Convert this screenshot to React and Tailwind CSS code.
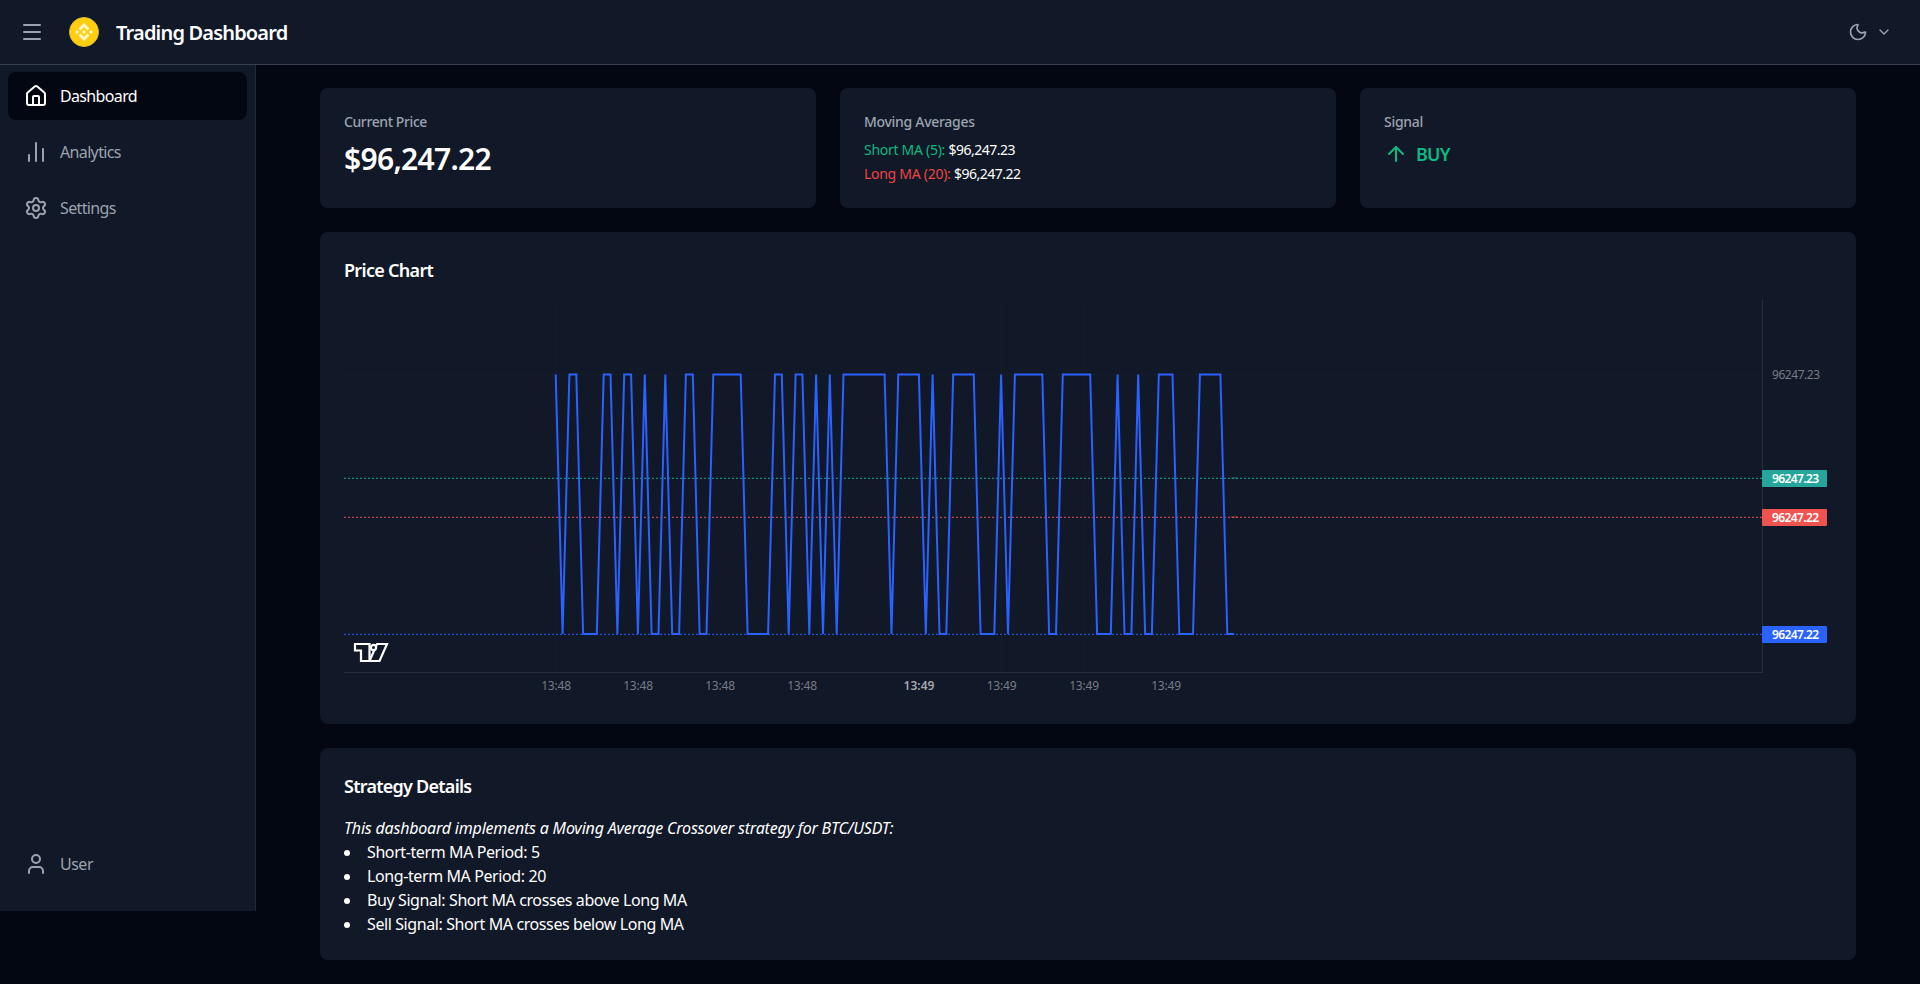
import { ArrowUp, ChartNoAxesColumn, ChevronDown, House, Menu, Moon, Settings, User } from "lucide-react";

const FONT = "font-['Noto_Sans',sans-serif]";

// H = top of the range, L = bottom, one letter per tick
const TICKS = "HLHHLLLHHLHHLHLLHLLHHLLHHHHHLLLLHHLHHLHLHLHHHHHHHLHHHHLHLLHHHHLLLHLHHHHHLLHHHHHLLLHLLHLLHHHLLLHHHHLL";
const X0 = 211.7;
const STEP = 6.853;
const Y_HIGH = 74.5;
const Y_LOW = 334;

const linePoints = TICKS.split("")
    .map((t, i) => `${(X0 + i * STEP).toFixed(1)},${t === "H" ? Y_HIGH : Y_LOW}`)
    .join(" ");

const TIME_LABELS = [
    { x: 212, text: "13:48" },
    { x: 294, text: "13:48" },
    { x: 376, text: "13:48" },
    { x: 458, text: "13:48" },
    { x: 575, text: "13:49", strong: true },
    { x: 657.5, text: "13:49" },
    { x: 740, text: "13:49" },
    { x: 822, text: "13:49" },
];

const PRICE_LINES = [
    { y: 178.5, color: "#26a69a", label: "96247.23" },
    { y: 217.5, color: "#ef5350", label: "96247.22" },
    { y: 334.5, color: "#2962ff", label: "96247.22" },
];

const NAV = [
    { label: "Dashboard", icon: House, active: true },
    { label: "Analytics", icon: ChartNoAxesColumn },
    { label: "Settings", icon: Settings },
];

const BinanceLogo = () => (
    <span className="flex h-[30px] w-[30px] items-center justify-center rounded-full border border-[#e0b83a] bg-[#ffcf0d]">
        <svg width="18" height="18" viewBox="0 0 24 24" fill="#fff7d6">
            <path d="M16.624 13.9202l2.7175 2.7154-7.353 7.353-7.353-7.352 2.7175-2.7164 4.6355 4.6595 4.6356-4.6595zm4.6366-4.6366L24 12l-2.7154 2.7164L18.5682 12l2.6924-2.7164zm-9.272.001l2.7163 2.6914-2.7164 2.7174v-.001L9.2721 12l2.7164-2.7154zm-9.2722-.001L5.4088 12l-2.6914 2.6924L0 12l2.7164-2.7164zM11.9885.0115l7.353 7.329-2.7174 2.7154-4.6356-4.6356-4.6355 4.6595-2.7174-2.7154 7.353-7.353z" />
        </svg>
    </span>
);

const PriceChart = () => (
    <svg width="1488" height="400" viewBox="0 0 1488 400" className="block">
        {[211.7, 294, 376, 458, 575, 657.5, 740, 822].map((x) => (
            <line key={x} x1={x} x2={x} y1="0" y2="372" stroke="#2a2e39" strokeOpacity="0.2" />
        ))}
        <line x1="0" x2="1418" y1="74.5" y2="74.5" stroke="#2a2e39" strokeOpacity="0.2" />

        <rect x="887" y="177" width="7" height="2" fill="#26a69a" opacity="0.3" />
        <rect x="887" y="216" width="7" height="2" fill="#ef5350" opacity="0.3" />

        {PRICE_LINES.map((l) => (
            <line key={l.y} x1="0" x2="1418" y1={l.y - 0.2} y2={l.y - 0.2} stroke={l.color} strokeWidth="1" strokeDasharray="2 2" />
        ))}

        <polyline points={linePoints} fill="none" stroke="#2962ff" strokeWidth="2" strokeLinejoin="miter" />

        <line x1="1418.5" x2="1418.5" y1="0" y2="372" stroke="#2a2e39" />
        <line x1="0" x2="1419" y1="372.5" y2="372.5" stroke="#2a2e39" />

        <text x="1428" y="79" fontSize="12" fill="#787b86" fontFamily="Noto Sans" letterSpacing="-0.45">96247.23</text>

        {PRICE_LINES.map((l) => (
            <g key={l.label + l.y}>
                <rect x="1418" y={l.y - 8.5} width="65" height="17" rx="1" fill={l.color} />
                <text x="1428" y={l.y + 4} fontSize="12" fontWeight="600" fill="#fff" fontFamily="Noto Sans" letterSpacing="-0.6">{l.label}</text>
            </g>
        ))}

        {TIME_LABELS.map((t) => (
            <text
                key={t.x}
                x={t.x}
                y="390"
                textAnchor="middle"
                fontSize="12"
                fontWeight={t.strong ? 600 : 400}
                fill={t.strong ? "#a3a6af" : "#787b86"}
                fontFamily="Noto Sans"
                letterSpacing={t.strong ? "0" : "-0.2"}
            >
                {t.text}
            </text>
        ))}

        {/* chart library watermark */}
        <g transform="translate(10,343)" fill="#111827" stroke="#fff" strokeWidth="2.2">
            <path d="M1 1H15.5V18H7V7.5H1Z" />
            <path d="M24 18H15.5L23 1H33L25.5 18Z" />
            <circle cx="19.5" cy="4.5" r="2.6" />
        </g>
    </svg>
);

const App = () => {
    return (
        <div className={`flex min-h-screen flex-col bg-[#030712] ${FONT}`}>
            <header className="flex h-[65px] items-center justify-between border-b border-[#374151] bg-[#111827] pl-[20px] pr-[28px]">
                <div className="flex items-center">
                    <Menu size={24} className="text-[#9ca3af]" strokeWidth={2} />
                    <div className="ml-[25px] mr-[17px]"><BinanceLogo /></div>
                    <span className="relative top-px text-[20px] font-semibold tracking-[-0.82px] text-white">Trading Dashboard</span>
                </div>
                <div className="flex items-center gap-2 text-[#9ca3af]">
                    <Moon size={20} />
                    <ChevronDown size={16} />
                </div>
            </header>

            <div className="flex">
                <aside className="flex h-[846px] w-64 flex-col justify-between border-r border-[#1f2937] bg-[#111827] pb-[23px] pl-2 pr-2 pt-[7px]">
                    <nav className="flex flex-col gap-2">
                        {NAV.map(({ label, icon: Icon, active }) => (
                            <div
                                key={label}
                                className={`flex h-12 items-center gap-3 rounded-lg px-4 text-[16px] tracking-[-0.65px] ${active ? "bg-[#030712] text-white" : "text-[#9ca3af]"}`}
                            >
                                <Icon size={24} strokeWidth={2} />
                                <span>{label}</span>
                            </div>
                        ))}
                    </nav>
                    <div className="flex h-12 items-center gap-3 px-4 text-[16px] tracking-[-0.5px] text-[#9ca3af]">
                        <User size={24} />
                        <span>User</span>
                    </div>
                </aside>

                <main className="flex-1 px-16 pt-[23px]">
                    <div className="grid grid-cols-3 gap-6">
                        <div className="h-[120px] rounded-lg bg-[#111827] p-6">
                            <h3 className="text-[14px] font-medium leading-5 tracking-[-0.4px] text-[#9ca3af]">Current Price</h3>
                            <p className="mt-[9px] text-[30px] font-semibold leading-9 tracking-[-0.7px] text-white">$96,247.22</p>
                        </div>
                        <div className="h-[120px] rounded-lg bg-[#111827] p-6">
                            <h3 className="text-[14px] font-medium leading-5 tracking-[-0.3px] text-[#9ca3af]">Moving Averages</h3>
                            <div className="mt-[6px] text-[14px] leading-6 tracking-[-0.28px]">
                                <p className="text-[#10b981]">Short MA (5): <span className="tracking-[-0.5px] text-white">$96,247.23</span></p>
                                <p className="text-[#ef4444]">Long MA (20): <span className="tracking-[-0.5px] text-white">$96,247.22</span></p>
                            </div>
                        </div>
                        <div className="h-[120px] rounded-lg bg-[#111827] p-6">
                            <h3 className="text-[14px] font-medium leading-5 tracking-[-0.3px] text-[#9ca3af]">Signal</h3>
                            <div className="mt-2 flex h-7 items-center gap-2 text-[#10b981]">
                                <ArrowUp size={24} />
                                <span className="text-[18px] font-semibold tracking-[-0.8px]">BUY</span>
                            </div>
                        </div>
                    </div>

                    <section className="mt-6 h-[492px] rounded-lg bg-[#111827] p-6">
                        <h2 className="mb-4 text-[18px] font-semibold leading-7 tracking-[-0.7px] text-white">Price Chart</h2>
                        <PriceChart />
                    </section>

                    <section className="mt-6 h-[212px] rounded-lg bg-[#111827] p-6">
                        <h2 className="mb-4 text-[18px] font-semibold leading-7 tracking-[-0.75px] text-white">Strategy Details</h2>
                        <div className="text-[16px] leading-6 tracking-[-0.4px] text-white">
                            <p className="italic tracking-[-0.2px]">This dashboard implements a Moving Average Crossover strategy for BTC/USDT:</p>
                            <ul className="list-inside list-disc">
                                <li>Short-term MA Period: 5</li>
                                <li>Long-term MA Period: 20</li>
                                <li>Buy Signal: Short MA crosses above Long MA</li>
                                <li>Sell Signal: Short MA crosses below Long MA</li>
                            </ul>
                        </div>
                    </section>
                </main>
            </div>
        </div>
    );
};

export default App;
